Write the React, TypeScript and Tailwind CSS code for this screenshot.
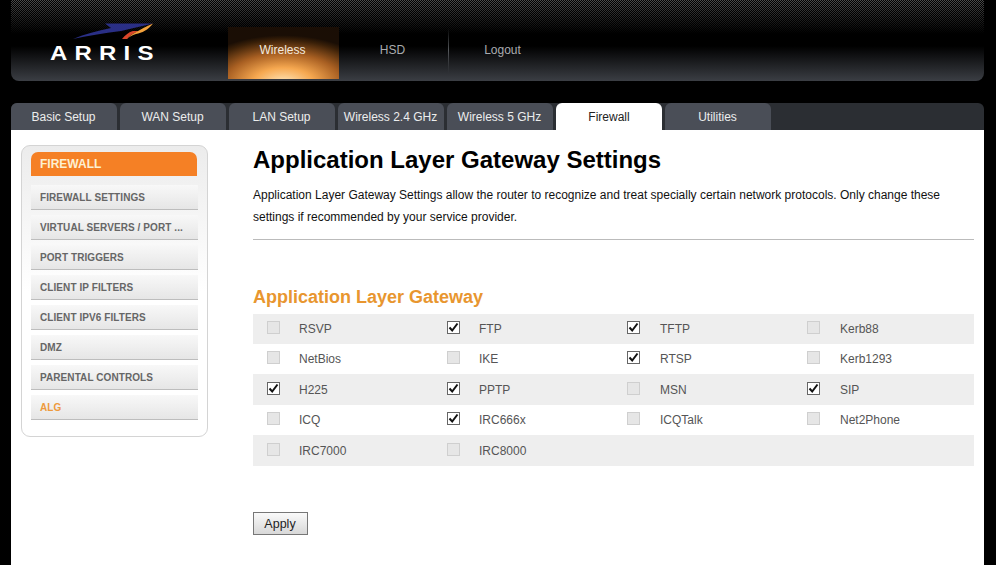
const tabs = [
  "Basic Setup",
  "WAN Setup",
  "LAN Setup",
  "Wireless 2.4 GHz",
  "Wireless 5 GHz",
  "Firewall",
  "Utilities",
];

const sideItems = [
  "FIREWALL SETTINGS",
  "VIRTUAL SERVERS / PORT ...",
  "PORT TRIGGERS",
  "CLIENT IP FILTERS",
  "CLIENT IPV6 FILTERS",
  "DMZ",
  "PARENTAL CONTROLS",
  "ALG",
];

const rows: { height: string; cells: [string, boolean][] }[] = [
  { height: "h-[30px] bg-[#eeeeee]", cells: [["RSVP", false], ["FTP", true], ["TFTP", true], ["Kerb88", false]] },
  { height: "h-[30px] bg-white", cells: [["NetBios", false], ["IKE", false], ["RTSP", true], ["Kerb1293", false]] },
  { height: "h-[31px] bg-[#eeeeee]", cells: [["H225", true], ["PPTP", true], ["MSN", false], ["SIP", true]] },
  { height: "h-[30px] bg-white", cells: [["ICQ", false], ["IRC666x", true], ["ICQTalk", false], ["Net2Phone", false]] },
  { height: "h-[31px] bg-[#eeeeee]", cells: [["IRC7000", false], ["IRC8000", false]] },
];

function Logo() {
  return (
    <div className="relative w-[217px] pt-[22px] pl-[39px]">
      <svg width="90" height="20" viewBox="0 0 90 20" className="ml-[23px]">
        <path d="M0 17 C12 12 24 9 38 6 L32 1.5 L80 1.5 L48 9 C30 11 14 14 0 17 Z" fill="#2a2f86" />
        <path d="M49 17 C52 13 56 10 60 9 L66 9 C60 11 56 14 54 17 Z" fill="#d8452a" />
        <path d="M54 17 C57 13 66 8 80 1.5 C75 8 69 11 63 12 C59 13 56 15 54 17 Z" fill="#f3a23c" />
      </svg>
      <div className="mt-[1px] origin-left scale-x-[1.2] text-[20px] leading-[20px] font-bold tracking-[6px] text-white">
        ARRIS
      </div>
    </div>
  );
}

function Checkbox({ checked }: { checked: boolean }) {
  if (!checked) {
    return <span className="block w-[13px] h-[13px] border border-[#cfcfcf] bg-[#e6e6e6]" />;
  }
  return (
    <span className="block w-[13px] h-[13px] border border-[#666] bg-white">
      <svg viewBox="0 0 11 11" className="w-[11px] h-[11px]">
        <path d="M1.5 5.5 L4.2 8.5 L9.5 1.5" fill="none" stroke="#111" strokeWidth="2" />
      </svg>
    </span>
  );
}

export default function App() {
  return (
    <div className="h-[565px] w-[996px] overflow-hidden bg-black pl-[11px] pr-[12px] font-['Liberation_Sans',Arial,sans-serif]">
      {/* Header */}
      <div className="relative flex h-[81px] rounded-b-[8px] bg-[linear-gradient(to_bottom,#000_46px,#3b3e44_81px)]">
        {/* dotted texture, fades out before the nav text */}
        <div className="absolute inset-x-0 top-0 h-[34px] [background:linear-gradient(to_bottom,rgba(0,0,0,0)_0%,#000_100%),repeating-conic-gradient(#4c4c4c_0_25%,#000_0_50%)_0_0/2px_2px]" />
        <Logo />
        <div className="relative flex h-[79px] pt-[27px] text-[12px]">
          <div className="flex w-[111px] items-center justify-center pb-[6px] pr-[2px] text-[#f3eadf] bg-[radial-gradient(ellipse_85%_92%_at_50%_108%,#ffe8bd_0%,#f6a850_32%,#a85f22_62%,#3a2008_90%,#1a0e05_100%)]">
            Wireless
          </div>
          <div className="flex w-[109px] items-center justify-center pb-[6px] pr-[2px] text-[#a9abaf]">HSD</div>
          <div className="mb-[6px] mt-[1px] w-px bg-gradient-to-b from-transparent via-[#55585c] to-transparent" />
          <div className="flex w-[109px] items-center justify-center pb-[6px] pr-[2px] text-[#a9abaf]">Logout</div>
        </div>
      </div>

      {/* Tabs */}
      <div className="mt-[22px] flex h-[27px] gap-[3px] rounded-t-[6px] bg-[#2b2e33]">
        {tabs.map((tab) => (
          <div
            key={tab}
            className={
              tab === "Firewall"
                ? "flex w-[106px] items-center justify-center rounded-t-[6px] bg-white pt-[1px] text-[12px] text-[#222]"
                : "flex w-[106px] items-center justify-center rounded-t-[6px] bg-[#4a4e57] pt-[1px] pr-[1px] text-[12px] text-[#eceded]"
            }
          >
            {tab}
          </div>
        ))}
      </div>

      {/* Content */}
      <div className="flex h-[435px] bg-white">
        {/* Sidebar */}
        <div className="ml-[10px] mt-[15px] h-[292px] w-[187px] rounded-[9px] border border-[#d4d4d4] bg-gradient-to-b from-[#ececec] via-white to-white pl-[9px] pt-[6px]">
          <div className="flex h-[24px] w-[166px] items-center rounded-t-[7px] bg-[#f58025] pl-[9px] text-[12px] font-bold text-[#fdf0d2]">
            FIREWALL
          </div>
          <div className="mt-[9px] flex w-[167px] flex-col gap-[5px]">
            {sideItems.map((item) => (
              <div
                key={item}
                className={
                  item === "ALG"
                    ? "flex h-[25px] items-center border-b border-[#bdbdbd] bg-gradient-to-b from-[#f8f8f8] to-[#e6e6e6] pl-[9px] pt-[1px] text-[10px] font-bold tracking-[0.08px] text-[#ee9a3c]"
                    : "flex h-[25px] items-center border-b border-[#bdbdbd] bg-gradient-to-b from-[#f8f8f8] to-[#e6e6e6] pl-[9px] pt-[1px] text-[10px] font-bold tracking-[0.08px] text-[#666]"
                }
              >
                {item}
              </div>
            ))}
          </div>
        </div>

        {/* Main */}
        <div className="ml-[45px] w-[721px]">
          <h1 className="mt-[16px] text-[24px] leading-[28px] font-bold text-black">
            Application Layer Gateway Settings
          </h1>
          <p className="mt-[10px] w-[700px] text-[12px] leading-[22px] text-[#111]">
            Application Layer Gateway Settings allow the router to recognize and treat specially certain network protocols. Only change these settings if recommended by your service provider.
          </p>
          <div className="mt-[11px] h-px bg-[#bbb]" />
          <h2 className="mt-[47px] text-[18px] leading-[20px] font-bold text-[#e8962f]">Application Layer Gateway</h2>
          <div className="mt-[7px]">
            {rows.map((row) => (
              <div key={row.cells[0][0]} className={`flex items-center text-[12px] text-[#555] ${row.height}`}>
                {row.cells.map(([label, checked], col) => (
                  <div key={label} className="flex w-[180px] items-center pl-[14px]">
                    <div className="-mt-[3px]">
                      <Checkbox checked={checked} />
                    </div>
                    <span className={col > 1 ? "ml-[20px]" : "ml-[19px]"}>{label}</span>
                  </div>
                ))}
              </div>
            ))}
          </div>
          <button className="mt-[46px] flex h-[23px] w-[55px] items-center justify-center border border-[#777] bg-gradient-to-b from-[#fafafa] to-[#d8d8d8] pt-[1px] pr-[1px] text-[12.5px] text-[#222]">
            Apply
          </button>
        </div>
      </div>
    </div>
  );
}
